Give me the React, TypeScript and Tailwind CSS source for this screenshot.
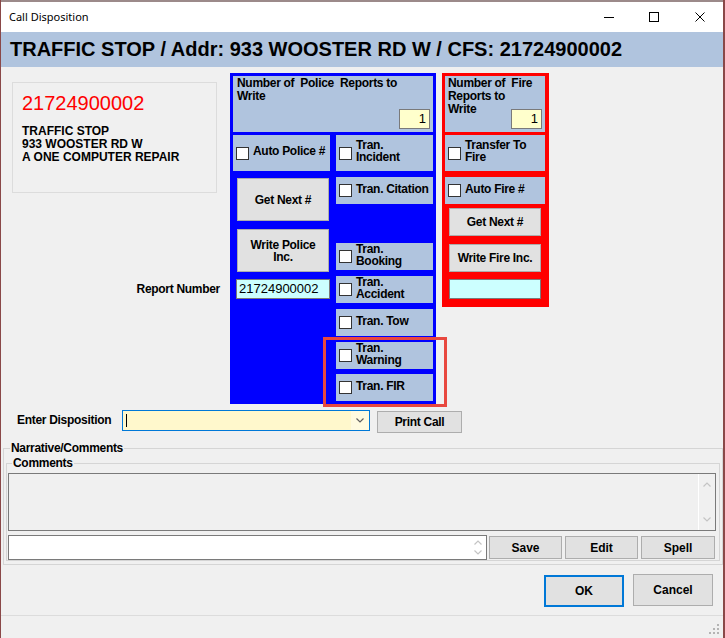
import React from 'react';

// Small chevron used by the scroll arrows and the combo box
const Chevron: React.FC<{ up?: boolean; color?: string; className?: string }> = ({
  up = false,
  color = '#c4c4c4',
  className = ''
}) => (
  <svg width="8" height="5" viewBox="0 0 8 5" className={className}>
    <path d={up ? 'M0.5 4.5 L4 1 L7.5 4.5' : 'M0.5 0.5 L4 4 L7.5 0.5'} fill="none" stroke={color} strokeWidth="1.2" />
  </svg>
);

const Check = () => <span className="block w-[13px] h-[13px] shrink-0 border border-[#333333] bg-white" />;

interface CheckCellProps {
  lines: string[];
  className?: string;
}

// Steel blue cell with a checkbox and a one or two line label
const CheckCell: React.FC<CheckCellProps> = ({ lines, className = '' }) => (
  <div className={`flex items-center bg-[#b0c4de] pl-[3px] ${className}`}>
    <Check />
    <div className="ml-[4px] -mt-[4px] leading-[12px] whitespace-nowrap">
      {lines.map((l) => (
        <div key={l}>{l}</div>
      ))}
    </div>
  </div>
);

const Btn: React.FC<{ children: React.ReactNode; className?: string; focused?: boolean }> = ({
  children,
  className = '',
  focused = false
}) => (
  <button
    className={`flex items-center justify-center text-center bg-[#e1e1e1] leading-[12px] ${
      focused ? 'border-2 border-[#0078d7]' : 'border border-[#adadad]'
    } ${className}`}
  >
    {children}
  </button>
);

const CountBox = () => (
  <div className="self-end w-[31px] h-[20px] shrink-0 bg-[#ffffcc] border border-[#7a7a7a] text-right pr-[3px] font-normal text-[13px] leading-[18px] tracking-normal">
    1
  </div>
);

export default function App() {
  return (
    <div className="w-[725px] h-[638px] flex flex-col bg-[#f0f0f0] border-l border-r-2 border-[#8a4848] overflow-hidden font-['Liberation_Sans',Arial,sans-serif] text-[12px] font-bold text-black">
      {/* window frame top */}
      <div className="h-[2px] bg-[#9c8a8a]" />

      {/* title bar */}
      <div className="h-[30px] bg-white flex items-center pl-[8px] font-['Noto_Sans',sans-serif] font-normal text-[11px]">
        <span>Call Disposition</span>
        <div className="ml-auto flex items-center">
          <svg width="10" height="10" viewBox="0 0 10 10" className="mr-[35px]">
            <path d="M0 5.5 H10" stroke="#000" strokeWidth="1" />
          </svg>
          <svg width="10" height="10" viewBox="0 0 10 10" className="mr-[36px]">
            <rect x="0.5" y="0.5" width="9" height="9" fill="none" stroke="#000" strokeWidth="1" />
          </svg>
          <svg width="10" height="10" viewBox="0 0 10 10" className="mr-[18px]">
            <path d="M0.5 0.5 L9.5 9.5 M9.5 0.5 L0.5 9.5" stroke="#000" strokeWidth="1" />
          </svg>
        </div>
      </div>

      {/* header band */}
      <div className="h-[35px] bg-[#b0c4de] flex items-center pl-[9px] text-[20px] leading-[23px]">
        TRAFFIC STOP / Addr: 933 WOOSTER RD W / CFS: 21724900002
      </div>

      {/* main area */}
      <div className="flex items-start pt-[6px]">
        {/* left column */}
        <div className="w-[229px] pl-[11px] flex flex-col">
          <div className="mt-[9px] w-[205px] h-[111px] border border-[#dcdcdc] pl-[9px] pt-[9px]">
            <div className="text-[20px] leading-[23px] font-normal text-[#ff0000]">21724900002</div>
            <div className="mt-[10px] leading-[13px]">
              <div>TRAFFIC STOP</div>
              <div>933 WOOSTER RD W</div>
              <div>A ONE COMPUTER REPAIR</div>
            </div>
          </div>
          <div className="mt-[90px] pr-[10px] text-right leading-[13px] tracking-[-0.3px]">Report Number</div>
        </div>

        {/* police panel */}
        <div className="relative w-[206px] h-[331px] bg-[#0000ff] pt-[3px] px-[3px] tracking-[-0.3px]">
          <div className="h-[56px] bg-[#b0c4de] flex pl-[4px] pr-[3px] pb-[3px]">
            <div className="flex-1 min-w-0 leading-[13px] pt-[1px] whitespace-nowrap">
              Number of&nbsp; Police&nbsp; Reports to
              <br />
              Write
            </div>
            <CountBox />
          </div>

          <div className="flex mt-[3px]">
            <div className="w-[97px] flex flex-col">
              <CheckCell lines={['Auto Police #']} className="h-[36px]" />
              <Btn className="mt-[7px] ml-[4px] w-[92px] h-[43px]">Get Next #</Btn>
              <Btn className="mt-[8px] ml-[4px] w-[92px] h-[43px]">
                Write Police
                <br />
                Inc.
              </Btn>
              <div className="mt-[7px] ml-[3px] w-[94px] h-[20px] bg-[#ccffff] border border-[#7a7a7a] pl-[2px] font-normal text-[13px] leading-[18px] tracking-normal">
                21724900002
              </div>
            </div>
            <div className="w-[97px] ml-[6px] flex flex-col">
              <CheckCell lines={['Tran.', 'Incident']} className="h-[36px]" />
              <CheckCell lines={['Tran. Citation']} className="mt-[6px] h-[27px]" />
              <CheckCell lines={['Tran.', 'Booking']} className="mt-[39px] h-[27px]" />
              <CheckCell lines={['Tran.', 'Accident']} className="mt-[6px] h-[27px]" />
              <CheckCell lines={['Tran. Tow']} className="mt-[6px] h-[27px]" />
              <CheckCell lines={['Tran.', 'Warning']} className="mt-[6px] h-[27px]" />
              <CheckCell lines={['Tran. FIR']} className="mt-[5px] h-[27px]" />
            </div>
          </div>

          {/* highlight annotation around Warning / FIR */}
          <div className="absolute left-[93px] top-[264px] w-[124px] h-[70px] border-[3px] border-[#e8483f]" />
        </div>

        {/* fire panel */}
        <div className="ml-[6px] w-[107px] h-[234px] bg-[#ff0000] pt-[3px] pl-[3px] tracking-[-0.3px]">
          <div className="w-[100px] h-[56px] bg-[#b0c4de] flex pl-[3px] pr-[3px] pb-[3px]">
            <div className="flex-1 min-w-0 leading-[13px] pt-[1px] whitespace-nowrap">
              Number of&nbsp; Fire
              <br />
              Reports to
              <br />
              Write
            </div>
            <CountBox />
          </div>
          <CheckCell lines={['Transfer To', 'Fire']} className="mt-[3px] w-[100px] h-[36px]" />
          <CheckCell lines={['Auto Fire #']} className="mt-[6px] w-[100px] h-[27px]" />
          <Btn className="mt-[4px] ml-[4px] w-[92px] h-[28px]">Get Next #</Btn>
          <Btn className="mt-[8px] ml-[4px] w-[92px] h-[28px]">Write Fire Inc.</Btn>
          <div className="mt-[7px] ml-[4px] w-[92px] h-[20px] bg-[#ccffff] border border-[#7a7a7a]" />
        </div>
      </div>

      {/* disposition row */}
      <div className="flex items-start mt-[6px] pl-[16px]">
        <div className="w-[105px] leading-[21px] tracking-[-0.3px]">Enter Disposition</div>
        <div className="w-[248px] h-[21px] border border-[#0078d7] flex">
          <div className="flex-1 bg-[#fff8cc] flex items-center pl-[3px]">
            <span className="block w-px h-[13px] bg-black" />
          </div>
          <div className="w-[18px] bg-[#fffbe0] flex items-center justify-center">
            <Chevron color="#606060" />
          </div>
        </div>
        <Btn className="ml-[7px] mt-[1px] w-[85px] h-[22px] tracking-[-0.3px]">Print Call</Btn>
      </div>

      {/* narrative / comments group */}
      <div className="mt-[15px] ml-[2px] w-[720px] border border-[#d5d5d5] flex flex-col">
        <div className="-mt-[7px] ml-[6px] px-[1px] w-fit bg-[#f0f0f0] leading-[13px] tracking-[-0.3px]">
          Narrative/Comments
        </div>
        <div className="mt-[8px] ml-[2px] mb-[3px] w-[714px] border border-[#d5d5d5] flex flex-col">
          <div className="-mt-[7px] ml-[5px] px-[1px] w-fit bg-[#f0f0f0] leading-[13px] tracking-[-0.3px]">Comments</div>
          <div className="mt-[3px] ml-[1px] w-[708px] h-[58px] border border-[#7a7a7a] bg-[#f0f0f0] flex">
            <div className="flex-1" />
            <div className="w-[17px] border-l border-white flex flex-col items-center justify-between py-[8px]">
              <Chevron up />
              <Chevron />
            </div>
          </div>
          <div className="mt-[4px] ml-[1px] flex items-start h-[25px]">
            <div className="w-[479px] h-[25px] bg-white border border-[#7a7a7a] flex">
              <div className="flex-1" />
              <div className="w-[17px] flex flex-col items-center justify-between py-[4px]">
                <Chevron up />
                <Chevron />
              </div>
            </div>
            <Btn className="ml-[2px] mt-[1px] w-[73px] h-[23px]">Save</Btn>
            <Btn className="ml-[3px] mt-[1px] w-[73px] h-[23px]">Edit</Btn>
            <Btn className="ml-[3px] mt-[1px] w-[74px] h-[23px]">Spell</Btn>
          </div>
        </div>
      </div>

      {/* OK / Cancel */}
      <div className="mt-[9px] flex justify-end items-start pr-[10px]">
        <Btn focused className="mt-[1px] w-[80px] h-[32px]">OK</Btn>
        <Btn className="ml-[9px] w-[80px] h-[32px]">Cancel</Btn>
      </div>

      {/* status strip with resize grip */}
      <div className="mt-[8px] flex-1 border-t border-[#dcdcdc] flex justify-end items-end pr-[3px] pb-[3px]">
        <svg width="12" height="12" viewBox="0 0 12 12">
          <rect x="9" y="1" width="2" height="2" fill="#b4b4b4" />
          <rect x="5" y="5" width="2" height="2" fill="#b4b4b4" />
          <rect x="9" y="5" width="2" height="2" fill="#b4b4b4" />
          <rect x="1" y="9" width="2" height="2" fill="#b4b4b4" />
          <rect x="5" y="9" width="2" height="2" fill="#b4b4b4" />
          <rect x="9" y="9" width="2" height="2" fill="#b4b4b4" />
        </svg>
      </div>
    </div>
  );
}
